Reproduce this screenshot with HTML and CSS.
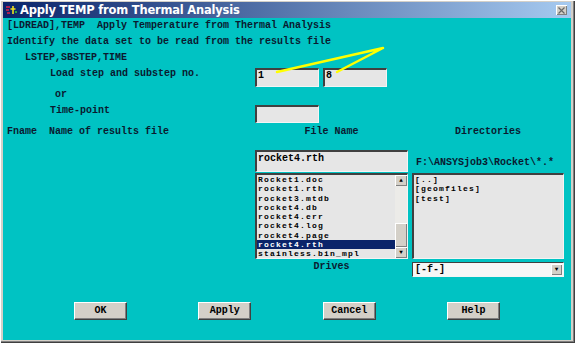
FILE: index.html
```html
<!DOCTYPE html>
<html lang="en">
<head>
    <meta charset="UTF-8">
    <title>Apply TEMP from Thermal Analysis</title>
    <link rel="stylesheet" href="styles.css">
</head>
<body>

    <div class="window">
        <!-- title bar -->
        <div class="titlebar">
            <svg class="app-icon" width="12" height="10" viewBox="0 0 12 10">
                <path d="M1 2h4M1 5h3M2 8h3" stroke="#e0204a" stroke-width="1.4"/>
                <path d="M8 1v8M5.5 4h5" stroke="#f0e020" stroke-width="1.6"/>
                <path d="M10 7h2" stroke="#30d040" stroke-width="1.4"/>
            </svg>
            <span class="title">Apply TEMP from Thermal Analysis</span>
            <span class="close-btn">
                <svg width="7" height="7" viewBox="0 0 7 7"><path d="M0.5 0.5l6 6M6.5 0.5l-6 6" stroke="#666" stroke-width="1.2"/></svg>
            </span>
        </div>

        <div class="content">
            <div class="line">[LDREAD],TEMP  Apply Temperature from Thermal Analysis</div>
            <div class="line">Identify the data set to be read from the results file</div>
            <div class="line indent">LSTEP,SBSTEP,TIME</div>

            <div class="field-row step-row">
                <div class="label">Load step and substep no.</div>
                <div class="input small">1</div>
                <div class="input small second">8</div>
            </div>

            <div class="or-row">or</div>

            <div class="field-row time-row">
                <div class="label">Time-point</div>
                <div class="input small"></div>
            </div>

            <div class="cols head">
                <div>Fname  Name of results file</div>
                <div class="center">File Name</div>
                <div class="center">Directories</div>
            </div>

            <div class="cols name-row">
                <div></div>
                <div class="input wide">rocket4.rth</div>
                <div class="path">F:\ANSYSjob3\Rocket\*.*</div>
            </div>

            <div class="cols list-row">
                <div></div>
                <div class="listbox">
                    <div class="items">
                        <div>Rocket1.doc</div>
                        <div>rocket1.rth</div>
                        <div>rocket3.mtdb</div>
                        <div>rocket4.db</div>
                        <div>rocket4.err</div>
                        <div>rocket4.log</div>
                        <div>rocket4.page</div>
                        <div class="selected">rocket4.rth</div>
                        <div>stainless.bin_mpl</div>
                    </div>
                    <div class="scrollbar">
                        <div class="arrow">&#9650;</div>
                        <div class="track"></div>
                        <div class="thumb"></div>
                        <div class="arrow">&#9660;</div>
                    </div>
                </div>
                <div class="listbox">
                    <div class="items">
                        <div>[..]</div>
                        <div>[geomfiles]</div>
                        <div>[test]</div>
                    </div>
                </div>
            </div>

            <div class="cols drive-row">
                <div></div>
                <div class="center drives">Drives</div>
                <div class="combo">
                    <span>[-f-]</span>
                    <span class="drop">&#9660;</span>
                </div>
            </div>

            <div class="buttons">
                <div class="btn">OK</div>
                <div class="btn">Apply</div>
                <div class="btn">Cancel</div>
                <div class="btn">Help</div>
            </div>
        </div>

        <!-- hint lines drawn over the dialog -->
        <svg class="pointer" width="575" height="343" viewBox="0 0 575 343">
            <path d="M383 48L277 72M383 48L337 72" stroke="#ffff00" stroke-width="2.5" fill="none" stroke-linecap="round"/>
        </svg>
    </div>

</body>
</html>
```

FILE: styles.css
```css
body {
    margin: 0;
    background-color: #d4d0c8;
}
.window {
    position: relative;
    width: 575px;
    height: 343px;
    box-sizing: border-box;
    padding: 2px 4px 3px 3px;
    background-color: #d4d0c8;
    box-shadow: inset 1px 1px #ffffff, inset -1px -1px #404040, inset -2px -2px #808080;
    display: flex;
    flex-direction: column;
    font-family: "Liberation Mono", "DejaVu Sans Mono", monospace;
    font-weight: bold;
    font-size: 10px;
    color: #0a1a30;
}
.titlebar {
    height: 16px;
    display: flex;
    align-items: center;
    background: linear-gradient(to right, #0a246a, #a6caf0);
    color: #fff;
}
.app-icon {
    margin: 0 3px 0 2px;
}
.title {
    font-family: "DejaVu Sans", "Liberation Sans", sans-serif;
    font-size: 11.5px;
    font-weight: bold;
    letter-spacing: -0.2px;
}
.close-btn {
    margin-left: auto;
    margin-right: 4px;
    width: 11px;
    height: 10px;
    background-color: #d4d0c8;
    box-shadow: inset 1px 1px #fff, inset -1px -1px #808080;
    display: flex;
    align-items: center;
    justify-content: center;
}
.content {
    flex: 1;
    background-color: #00c3c3;
    padding-left: 4px;
    display: flex;
    flex-direction: column;
}
.line {
    height: 16px;
    line-height: 16px;
    white-space: pre;
}
.indent {
    padding-left: 18px;
}
.field-row {
    display: flex;
}
.field-row .label {
    width: 205px;
    padding-left: 43px;
    flex-shrink: 0;
}
.step-row {
    height: 22px;
    line-height: 16px;
}
.step-row .input {
    margin-top: 2px;
    height: 19px;
}
.time-row {
    height: 22px;
    line-height: 18px;
}
.time-row .input {
    margin-top: 3px;
    height: 18px;
}
.or-row {
    height: 14px;
    line-height: 14px;
    padding-left: 48px;
}
.input {
    box-sizing: border-box;
    background-color: #e6e6e6;
    border-top: 2px solid #404040;
    border-left: 2px solid #404040;
    border-right: 1px solid #f4f4f4;
    border-bottom: 1px solid #f4f4f4;
    padding-left: 1px;
    line-height: 12px;
    color: #000;
}
.input.small {
    width: 64px;
}
.input.second {
    margin-left: 4px;
}
.cols {
    display: grid;
    grid-template-columns: 244px 153px 152px;
    column-gap: 4px;
}
.center {
    text-align: center;
}
.head {
    height: 16px;
    line-height: 16px;
    white-space: pre;
}
.name-row {
    margin-top: 10px;
    height: 22px;
}
.input.wide {
    height: 22px;
    line-height: 14px;
}
.path {
    padding: 6px 0 0 4px;
    line-height: 14px;
    white-space: pre;
}
.list-row {
    margin-top: 1px;
    height: 86px;
}
.listbox {
    box-sizing: border-box;
    display: flex;
    background-color: #e6e6e6;
    border-top: 2px solid #404040;
    border-left: 2px solid #404040;
    border-right: 1px solid #f4f4f4;
    border-bottom: 1px solid #f4f4f4;
    color: #000;
}
.items {
    flex: 1;
    font-size: 8px;
    letter-spacing: 1.2px;
    line-height: 9.25px;
}
.items div {
    padding-left: 1px;
    white-space: nowrap;
}
.items .selected {
    background-color: #0a246a;
    color: #fff;
}
.scrollbar {
    width: 12px;
    display: flex;
    flex-direction: column;
    background-color: #d4d0c8;
}
.arrow {
    height: 11px;
    font-size: 6px;
    line-height: 11px;
    text-align: center;
    background-color: #d4d0c8;
    box-shadow: inset 1px 1px #fff, inset -1px -1px #808080;
    color: #000;
}
.track {
    flex: 1;
    background-color: #ecebe8;
}
.thumb {
    height: 24px;
    background-color: #d4d0c8;
    box-shadow: inset 1px 1px #fff, inset -1px -1px #808080;
}
.drive-row {
    margin-top: 3px;
    height: 15px;
}
.drives {
    line-height: 10px;
}
.combo {
    box-sizing: border-box;
    display: flex;
    align-items: center;
    background-color: #f6f6f6;
    border-top: 1px solid #404040;
    border-left: 1px solid #404040;
    border-right: 1px solid #f4f4f4;
    border-bottom: 1px solid #f4f4f4;
    padding-left: 2px;
    color: #000;
}
.combo .drop {
    margin-left: auto;
    margin-right: 1px;
    width: 11px;
    height: 11px;
    font-size: 6px;
    line-height: 11px;
    text-align: center;
    background-color: #d4d0c8;
    box-shadow: inset 1px 1px #fff, inset -1px -1px #808080;
}
.buttons {
    margin: 25px 0 0 67px;
    width: 426px;
    display: flex;
    justify-content: space-between;
}
.btn {
    box-sizing: border-box;
    width: 53px;
    height: 18px;
    line-height: 16px;
    text-align: center;
    background-color: #d4d0c8;
    border-top: 1px solid #ffffff;
    border-left: 1px solid #ffffff;
    border-right: 1px solid #404040;
    border-bottom: 1px solid #404040;
    box-shadow: inset -1px -1px #808080;
    color: #000;
}
.pointer {
    position: absolute;
    left: 0;
    top: 0;
    pointer-events: none;
}
```
